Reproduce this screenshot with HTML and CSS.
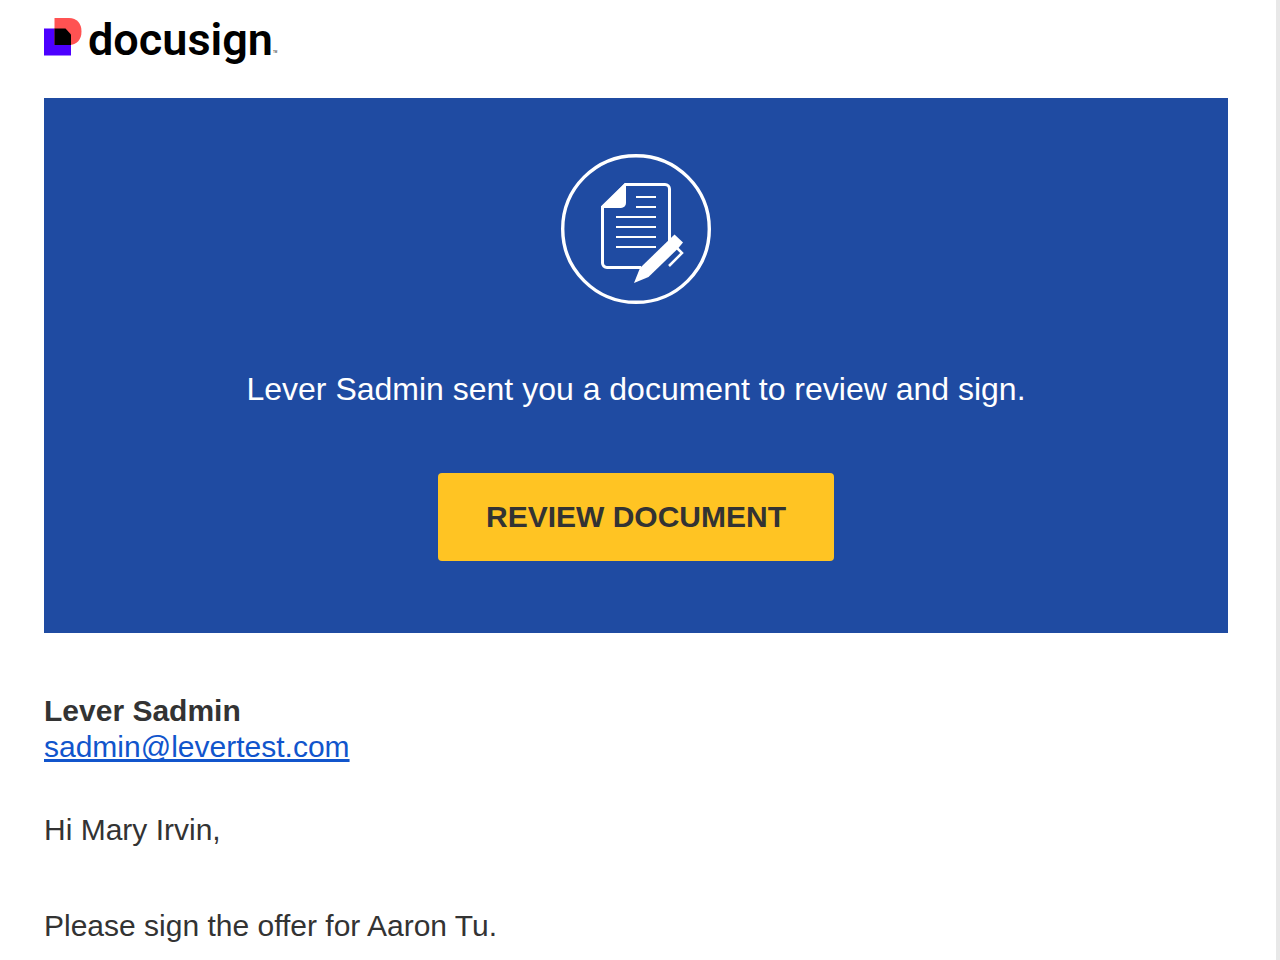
FILE: index.html
```
<!DOCTYPE html>
<html lang="en">
<head>
    <meta charset="UTF-8">
    <meta name="viewport" content="width=device-width, initial-scale=1.0">
    <title>Docusign</title>
    <link rel="stylesheet" href="styles.css">
</head>
<body>
    <div class="email">
        <header class="logo">
            <svg class="logo-mark" width="38" height="38" viewBox="0 0 38 38" aria-hidden="true">
                <rect x="0" y="10.500" width="27" height="27" fill="#4c00ff"/>
                <path d="M10.500 0H25C33 0 37.500 5.500 37.500 13.500S33 27 25 27H10.500Z" fill="#ff5252"/>
                <path d="M10.500 10.500H21.500L27 16.500V27H10.500Z" fill="#000"/>
            </svg>
            <span class="logo-text">docusign</span>
            <span class="logo-tm">TM</span>
        </header>

        <section class="banner">
            <svg class="banner-icon" width="150" height="150" viewBox="0 0 150 150" aria-hidden="true">
                <circle cx="75" cy="75" r="73.300" fill="none" stroke="#fff" stroke-width="3.400"/>
                <path d="M80 113.500H46a4.500 4.500 0 0 1-4.500-4.500V53L64.500 30.500H104a4.500 4.500 0 0 1 4.500 4.500V87" fill="none" stroke="#fff" stroke-width="3"/>
                <path d="M40 54L64 29H65V49a5 5 0 0 1-5 5Z" fill="#fff"/>
                <path d="M75 43H95M75 53H95M55 63H95M55 73H95M55 83H95M55 93H95" stroke="#fff" stroke-width="2"/>
                <path d="M73 129L79 114L113.500 80.500L122 88.500L117 94.500L87.500 123Z" fill="#fff"/>
                <path d="M115 93L121 99L108 112" fill="none" stroke="#fff" stroke-width="2.500"/>
            </svg>
            <p class="banner-text">Lever Sadmin sent you a document to review and sign.</p>
            <button class="review-button" type="button">REVIEW DOCUMENT</button>
        </section>

        <main class="message">
            <div class="sender">
                <strong>Lever Sadmin</strong>
                <a href="mailto:sadmin@levertest.com">sadmin@levertest.com</a>
            </div>
            <p>Hi Mary Irvin,</p>
            <p>Please sign the offer for Aaron Tu.</p>
        </main>
    </div>
</body>
</html>
```
FILE: styles.css
```
body {
    margin: 0;
    background-color: white;
    color: #333;
    font-family: "Liberation Sans", Helvetica, Arial, sans-serif;
    font-size: 30px;
    line-height: 36px;
}
.email {
    box-sizing: border-box;
    min-height: 100vh;
    padding: 14px 48px 0 44px;
    border-right: 4px solid #e8e8e8;
}
.logo {
    display: flex;
    align-items: flex-start;
    height: 84px;
    color: black;
}
.logo-mark {
    margin-top: 4px;
}
.logo-text {
    margin-left: 6px;
    font-family: Roboto, sans-serif;
    font-size: 45px;
    font-weight: 600;
    line-height: 52px;
}
.logo-tm {
    margin-top: 36px;
    font-size: 3px;
    line-height: 4px;
}
.banner {
    display: flex;
    flex-direction: column;
    align-items: center;
    padding: 56px 24px 72px;
    background-color: #1f4ba2;
    color: white;
}
.banner-text {
    margin: 65px 0 63px;
    font-size: 32px;
    line-height: 41px;
    text-align: center;
}
.review-button {
    padding: 26px 48px;
    border: none;
    border-radius: 4px;
    background-color: #ffc423;
    color: #333;
    font-family: inherit;
    font-size: 30px;
    font-weight: bold;
    line-height: 36px;
    cursor: pointer;
}
.message {
    padding-top: 60px;
}
.sender {
    display: flex;
    flex-direction: column;
    align-items: flex-start;
}
.sender a {
    color: #1155cc;
    text-decoration-skip-ink: none;
}
.message p {
    margin: 47px 0 0;
}
.message p + p {
    margin-top: 60px;
}
```
